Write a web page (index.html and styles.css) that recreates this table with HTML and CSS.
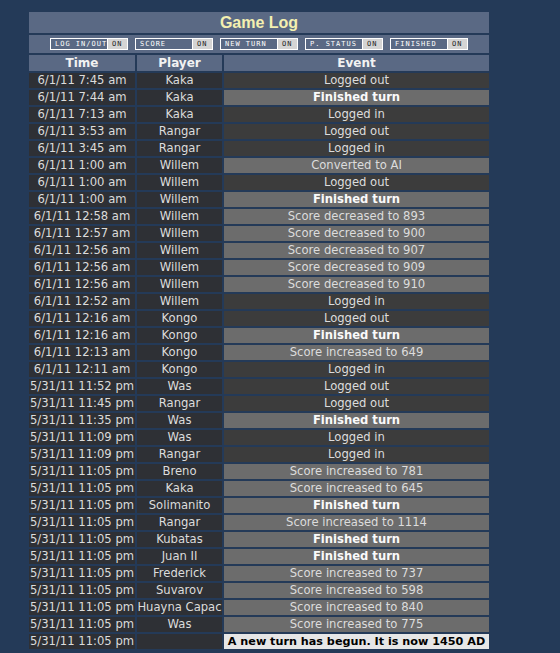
FILE: index.html
```html
<!DOCTYPE HTML>
<html lang="en">
<head>
    <meta charset="UTF-8">
    <title>Game Log</title>
    <link rel="stylesheet" href="styles.css">
</head>
<body>
    <div id="wrapper">
        <table class="log">
            <colgroup>
                <col class="col-time">
                <col class="col-player">
                <col class="col-event">
            </colgroup>
            <tr><td class="title" colspan="3">Game Log</td></tr>
            <tr>
                <td class="filters" colspan="3">
                    <div class="filter-row">
                        <span class="toggle"><span class="toggle-name">LOG IN/OUT</span><span class="toggle-state">ON</span></span>
                        <span class="toggle"><span class="toggle-name">SCORE</span><span class="toggle-state">ON</span></span>
                        <span class="toggle"><span class="toggle-name">NEW TURN</span><span class="toggle-state">ON</span></span>
                        <span class="toggle"><span class="toggle-name">P. STATUS</span><span class="toggle-state">ON</span></span>
                        <span class="toggle"><span class="toggle-name">FINISHED</span><span class="toggle-state">ON</span></span>
                    </div>
                </td>
            </tr>
            <tr class="head"><th>Time</th><th>Player</th><th>Event</th></tr>
            <tr><td>6/1/11 7:45 am</td><td>Kaka</td><td class="ev">Logged out</td></tr>
            <tr><td>6/1/11 7:44 am</td><td>Kaka</td><td class="ev lt fin">Finished turn</td></tr>
            <tr><td>6/1/11 7:13 am</td><td>Kaka</td><td class="ev">Logged in</td></tr>
            <tr><td>6/1/11 3:53 am</td><td>Rangar</td><td class="ev">Logged out</td></tr>
            <tr><td>6/1/11 3:45 am</td><td>Rangar</td><td class="ev">Logged in</td></tr>
            <tr><td>6/1/11 1:00 am</td><td>Willem</td><td class="ev lt">Converted to AI</td></tr>
            <tr><td>6/1/11 1:00 am</td><td>Willem</td><td class="ev">Logged out</td></tr>
            <tr><td>6/1/11 1:00 am</td><td>Willem</td><td class="ev lt fin">Finished turn</td></tr>
            <tr><td>6/1/11 12:58 am</td><td>Willem</td><td class="ev lt">Score decreased to 893</td></tr>
            <tr><td>6/1/11 12:57 am</td><td>Willem</td><td class="ev lt">Score decreased to 900</td></tr>
            <tr><td>6/1/11 12:56 am</td><td>Willem</td><td class="ev lt">Score decreased to 907</td></tr>
            <tr><td>6/1/11 12:56 am</td><td>Willem</td><td class="ev lt">Score decreased to 909</td></tr>
            <tr><td>6/1/11 12:56 am</td><td>Willem</td><td class="ev lt">Score decreased to 910</td></tr>
            <tr><td>6/1/11 12:52 am</td><td>Willem</td><td class="ev">Logged in</td></tr>
            <tr><td>6/1/11 12:16 am</td><td>Kongo</td><td class="ev">Logged out</td></tr>
            <tr><td>6/1/11 12:16 am</td><td>Kongo</td><td class="ev lt fin">Finished turn</td></tr>
            <tr><td>6/1/11 12:13 am</td><td>Kongo</td><td class="ev lt">Score increased to 649</td></tr>
            <tr><td>6/1/11 12:11 am</td><td>Kongo</td><td class="ev">Logged in</td></tr>
            <tr><td>5/31/11 11:52 pm</td><td>Was</td><td class="ev">Logged out</td></tr>
            <tr><td>5/31/11 11:45 pm</td><td>Rangar</td><td class="ev">Logged out</td></tr>
            <tr><td>5/31/11 11:35 pm</td><td>Was</td><td class="ev lt fin">Finished turn</td></tr>
            <tr><td>5/31/11 11:09 pm</td><td>Was</td><td class="ev">Logged in</td></tr>
            <tr><td>5/31/11 11:09 pm</td><td>Rangar</td><td class="ev">Logged in</td></tr>
            <tr><td>5/31/11 11:05 pm</td><td>Breno</td><td class="ev lt">Score increased to 781</td></tr>
            <tr><td>5/31/11 11:05 pm</td><td>Kaka</td><td class="ev lt">Score increased to 645</td></tr>
            <tr><td>5/31/11 11:05 pm</td><td>Solimanito</td><td class="ev lt fin">Finished turn</td></tr>
            <tr><td>5/31/11 11:05 pm</td><td>Rangar</td><td class="ev lt">Score increased to 1114</td></tr>
            <tr><td>5/31/11 11:05 pm</td><td>Kubatas</td><td class="ev lt fin">Finished turn</td></tr>
            <tr><td>5/31/11 11:05 pm</td><td>Juan II</td><td class="ev lt fin">Finished turn</td></tr>
            <tr><td>5/31/11 11:05 pm</td><td>Frederick</td><td class="ev lt">Score increased to 737</td></tr>
            <tr><td>5/31/11 11:05 pm</td><td>Suvarov</td><td class="ev lt">Score increased to 598</td></tr>
            <tr><td>5/31/11 11:05 pm</td><td>Huayna Capac</td><td class="ev lt">Score increased to 840</td></tr>
            <tr><td>5/31/11 11:05 pm</td><td>Was</td><td class="ev lt">Score increased to 775</td></tr>
            <tr><td>5/31/11 11:05 pm</td><td></td><td class="ev news">A new turn has begun. It is now 1450 AD</td></tr>
        </table>
    </div>
</body>
</html>
```

FILE: styles.css
```css
body {
    margin: 0;
    background: #243a58;
    font-family: "DejaVu Sans", Verdana, sans-serif;
    font-size: 11.6px;
    color: #dcdcdc;
}
#wrapper {
    padding: 10px 0 0 27px;
}
.log {
    width: 464px;
    table-layout: fixed;
    border-collapse: separate;
    border-spacing: 2px;
}
.col-time {
    width: 106px;
}
.col-player {
    width: 85px;
}
.log td,
.log th {
    padding: 0;
    height: 15px;
    line-height: 15px;
    text-align: center;
    white-space: nowrap;
    overflow: hidden;
    background: #2e3035;
}
.log .title {
    height: 21px;
    line-height: 21px;
    background: #5a6984;
    color: #f4f0b0;
    font-family: "Liberation Sans", Arial, sans-serif;
    font-size: 16px;
    font-weight: bold;
}
.log .filters {
    height: 18px;
    background: #5a6984;
}
.filter-row {
    display: flex;
    justify-content: center;
    gap: 7px;
}
.toggle {
    display: flex;
    height: 10px;
    border: 1px solid #fff;
    font-family: "DejaVu Sans Mono", monospace;
    font-size: 7px;
    line-height: 10px;
    letter-spacing: 1px;
    text-align: left;
}
.toggle-name {
    width: 52px;
    padding-left: 4px;
    color: #fff;
}
.toggle-state {
    width: 15px;
    padding-left: 4px;
    background: #d4d4d4;
    color: #1c1c1c;
    border-left: 1px solid #fff;
}
.log .head th {
    height: 16px;
    line-height: 16px;
    background: #5a6984;
    color: #f2f2f2;
    font-size: 12px;
}
.log .ev {
    background: #3c3c3c;
}
.log .lt {
    background: #6c6c6c;
}
.log .fin {
    font-weight: bold;
    color: #fafafa;
}
.log .news {
    background: #e6e6e6;
    color: #000;
    font-weight: bold;
    font-size: 11.2px;
}
```
